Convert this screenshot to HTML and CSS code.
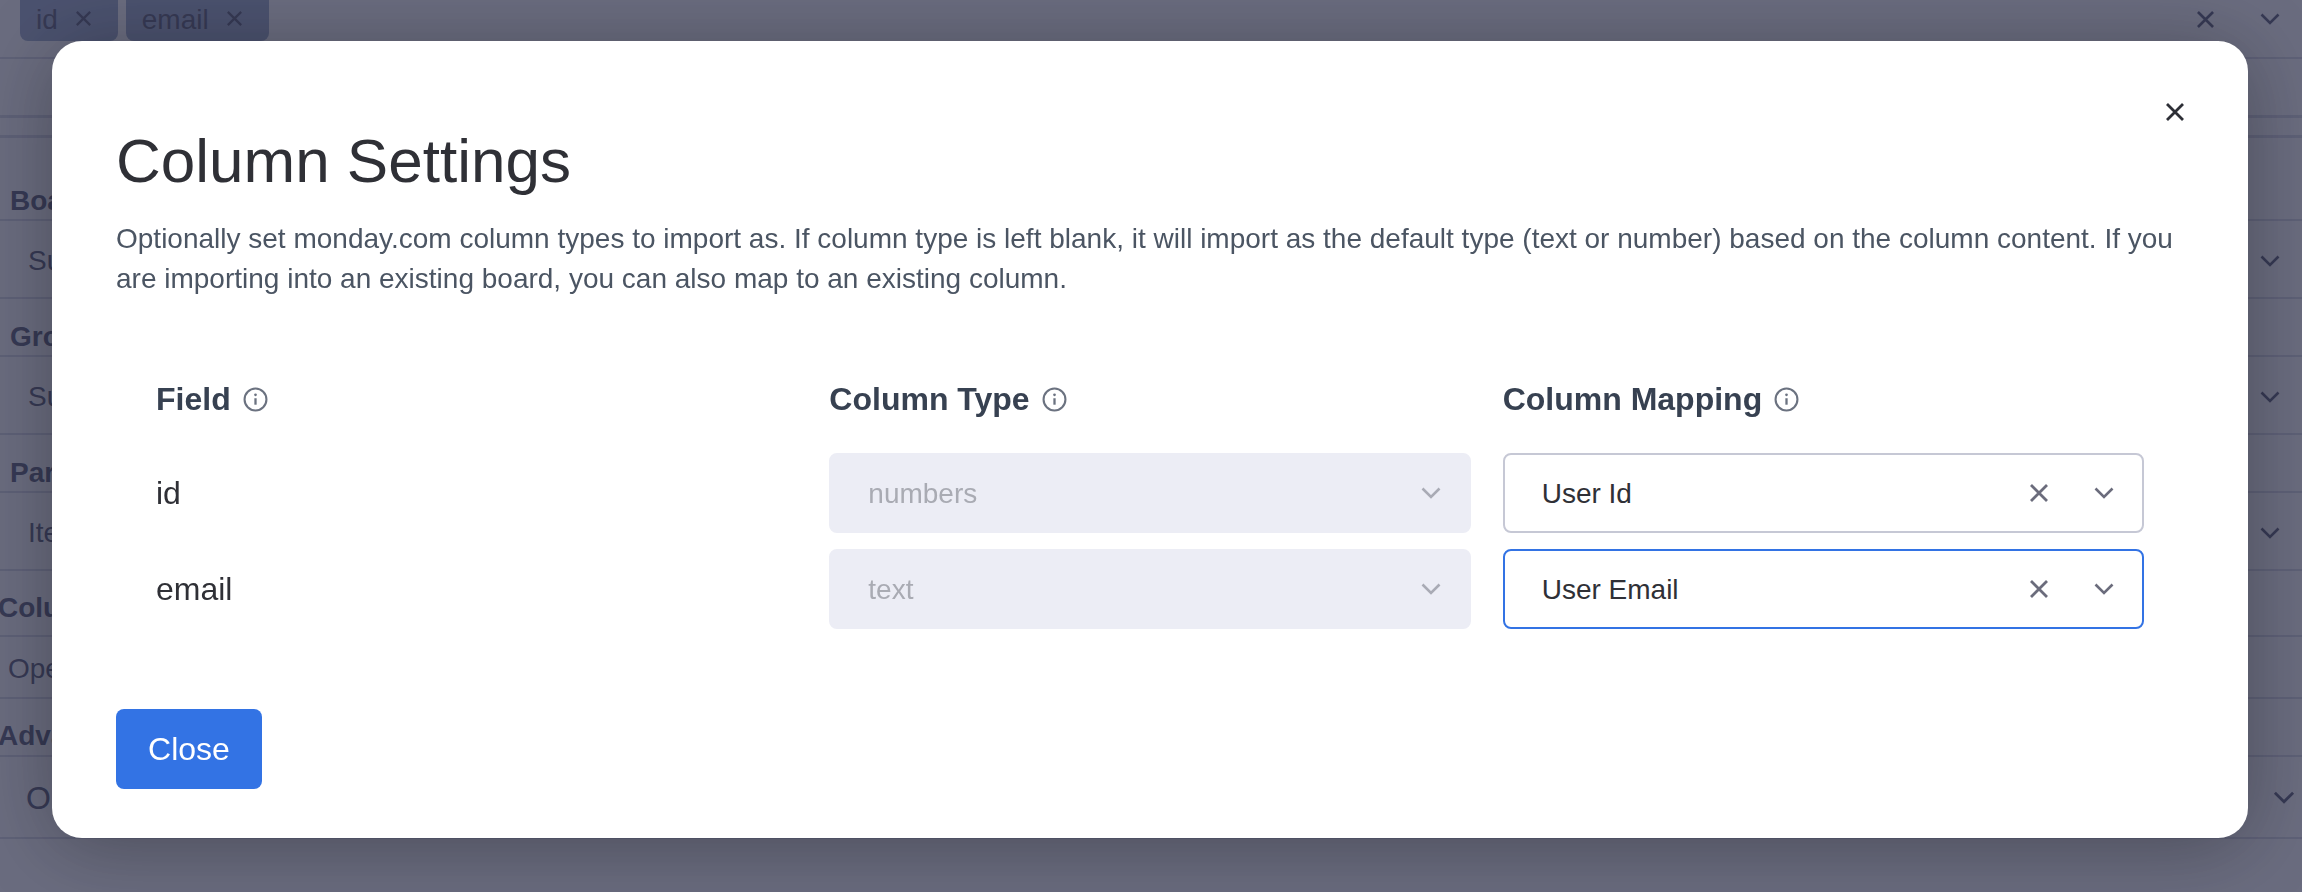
FILE: index.html
```html
<!DOCTYPE html>
<html lang="en">
<head>
<meta charset="utf-8">
<title>Column Settings</title>
<link rel="stylesheet" href="styles.css">
</head>
<body>
<svg class="defs" width="0" height="0" aria-hidden="true">
  <symbol id="x" viewBox="0 0 18 18"><path d="M1 1 17 17M17 1 1 17" fill="none" stroke="currentColor" stroke-width="2.800"/></symbol>
  <symbol id="chev" viewBox="0 0 20 14"><path d="M1.500 2.500 10 11l8.500-8.500" fill="none" stroke="currentColor" stroke-width="2.600"/></symbol>
  <symbol id="info" viewBox="0 0 24 24"><circle cx="12" cy="12" r="10.500" fill="none" stroke="currentColor" stroke-width="2"/><path d="M12 10.800v6.200" fill="none" stroke="currentColor" stroke-width="2.200"/><circle cx="12" cy="7.500" r="1.300" fill="currentColor"/></symbol>
</svg>
<div class="page">
  <div class="bar">
    <div class="chips">
      <span class="chip">id <svg class="chip-x"><use href="#x"/></svg></span>
      <span class="chip">email <svg class="chip-x"><use href="#x"/></svg></span>
    </div>
    <svg class="bg-x"><use href="#x"/></svg>
    <svg class="bg-chev"><use href="#chev"/></svg>
  </div>
  <div class="strip"></div>
  <div class="thin"></div>
  <div class="label tall">Board</div>
  <div class="field">Sub<svg class="bg-chev"><use href="#chev"/></svg></div>
  <div class="label">Group</div>
  <div class="field">Sub<svg class="bg-chev"><use href="#chev"/></svg></div>
  <div class="label">Parent</div>
  <div class="field">Items<svg class="bg-chev"><use href="#chev"/></svg></div>
  <div class="label short shifted">Columns</div>
  <div class="field narrow">Open</div>
  <div class="label shifted">Advan</div>
  <div class="field large">Op<svg class="bg-chev big"><use href="#chev"/></svg></div>
</div>
<div class="overlay">
  <div class="modal">
    <button class="modal-close" aria-label="Close"><svg class="modal-x"><use href="#x"/></svg></button>
    <h1 class="title">Column Settings</h1>
    <p class="desc">Optionally set monday.com column types to import as. If column type is left blank, it will import as the default type (text or number) based on the column content. If you are importing into an existing board, you can also map to an existing column.</p>
    <div class="grid">
      <div class="head">Field <svg class="info"><use href="#info"/></svg></div>
      <div class="head">Column Type <svg class="info"><use href="#info"/></svg></div>
      <div class="head">Column Mapping <svg class="info"><use href="#info"/></svg></div>

      <div class="name">id</div>
      <div class="select disabled"><span class="value">numbers</span><svg class="chev"><use href="#chev"/></svg></div>
      <div class="select"><span class="value">User Id</span><svg class="clear"><use href="#x"/></svg><svg class="chev"><use href="#chev"/></svg></div>

      <div class="name">email</div>
      <div class="select disabled"><span class="value">text</span><svg class="chev"><use href="#chev"/></svg></div>
      <div class="select focus"><span class="value">User Email</span><svg class="clear"><use href="#x"/></svg><svg class="chev"><use href="#chev"/></svg></div>
    </div>
    <button class="btn">Close</button>
  </div>
</div>
</body>
</html>
```

FILE: styles.css
```css
* { box-sizing: border-box; }
html, body { margin: 0; height: 100%; overflow: hidden; background: #fff; }
body { font-family: "Liberation Sans", Arial, sans-serif; color: #374151; }
.defs { display: block; }

.page { display: flex; flex-direction: column; height: 892px; }
.bar { height: 60px; flex: none; display: flex; align-items: center; padding: 0 22px 18px 20px; border-bottom: 2px solid #d6d8e4; margin-top: -1px; }
.chips { display: flex; gap: 8px; flex: 1; }
.chip { height: 60px; margin-top: -16px; padding: 19px 27px 0 16px; background: #98a8c8; border-radius: 8px; font-size: 28px; line-height: 40px; color: #52566f; display: flex; align-items: flex-start; gap: 18px; }
.chip-x { width: 15px; height: 15px; margin-top: 11px; color: #52566f; }
.bg-x { width: 17px; height: 17px; color: #52566f; margin-right: 46px; }
.bg-chev { width: 20px; height: 14px; color: #52566f; }
.strip { height: 59px; flex: none; border-bottom: 3px solid #d6d8e4; }
.thin { height: 20px; flex: none; border-bottom: 3px solid #d6d8e4; }
.label { height: 58px; flex: none; padding: 0 0 1px 10px; font-size: 28px; line-height: 34px; font-weight: 700; color: #52566f; border-bottom: 2px solid #d6d8e4; display: flex; align-items: flex-end; }
.label.tall { height: 83px; }
.label.shifted { padding-left: 0; text-indent: -2px; padding-bottom: 2px; }
.label.short { height: 66px; padding-bottom: 10px; }
.field { height: 78px; flex: none; padding: 4px 22px 0 28px; font-size: 28px; color: #52566f; border-bottom: 2px solid #d6d8e4; display: flex; align-items: center; justify-content: space-between; }
.field.narrow { height: 62px; padding-left: 8px; }
.field.large { height: 82px; padding: 2px 7px 0 26px; font-size: 32px; }
.bg-chev.big { width: 22px; height: 15px; margin-bottom: 2px; }

.overlay { position: fixed; inset: 0; background: rgba(43, 46, 73, 0.7); display: flex; padding: 41px 54px 54px 52px; }
.modal { position: relative; flex: 1; background: #fff; border-radius: 30px; padding: 84px 64px 0; box-shadow: 0 8px 80px rgba(0, 0, 0, 0.3); }
.modal-close { position: absolute; top: 62px; right: 64px; width: 18px; height: 18px; padding: 0; border: 0; background: none; color: #2d2f36; display: flex; }
.modal-x { width: 18px; height: 18px; }

.title { margin: 0; font-size: 62px; line-height: 72px; font-weight: 400; color: #2f3036; }
.desc { margin: 22px 0 0; font-size: 28px; line-height: 40px; color: #4b5563; }

.grid { display: grid; grid-template-columns: repeat(3, 1fr); column-gap: 32px; row-gap: 16px; margin-top: 80px; padding: 0 40px 0 40px; }
.head { height: 40px; margin-bottom: 18px; display: flex; align-items: center; gap: 12px; font-size: 32px; font-weight: 700; color: #374151; }
.info { width: 25px; height: 25px; color: #6b7280; }
.name { height: 80px; display: flex; align-items: center; font-size: 32px; color: #2f3036; }
.select { height: 80px; display: flex; align-items: center; padding: 0 28px 0 37px; border: 2px solid #c6c8d5; border-radius: 8px; font-size: 28px; color: #2f3036; background: #fff; }
.value { flex: 1; padding-top: 2px; }
.clear { width: 18px; height: 18px; color: #6b6c7c; margin-right: 46px; }
.chev { width: 20px; height: 14px; color: #6b6c7c; }
.select.focus { border-color: #3373e4; }
.select.disabled { background: #ecedf5; border-color: #ecedf5; color: #a9abb3; }
.select.disabled .chev { color: #a9abb5; }

.btn { display: block; margin-top: 80px; width: 146px; height: 80px; padding: 0; border: 0; border-radius: 8px; background: #3373e4; color: #fff; font: 400 32px "Liberation Sans", Arial, sans-serif; }
```
